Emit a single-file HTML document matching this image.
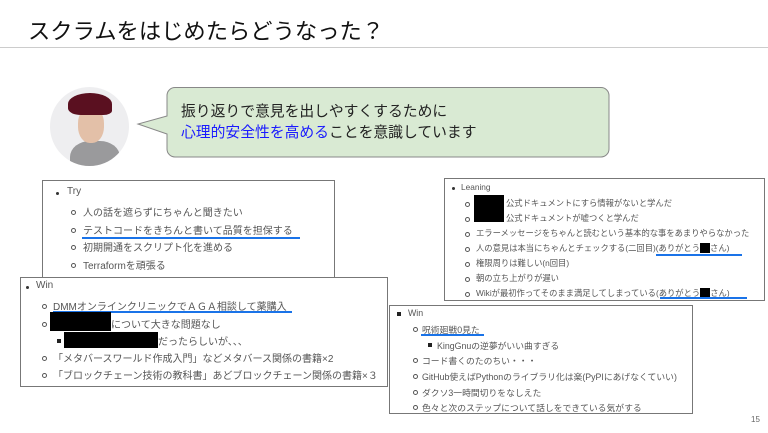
<!DOCTYPE html>
<html><head><meta charset="utf-8"><style>
body{margin:0;width:768px;height:433px;background:#fff;position:relative;overflow:hidden;font-family:"Liberation Sans","Noto Sans CJK JP",sans-serif;}
.a{position:absolute;white-space:nowrap;}
.box{position:absolute;border:1px solid #777;background:#fff;}
.t{position:absolute;white-space:nowrap;color:#555;}
.d{position:absolute;width:3px;height:3px;background:#333;border-radius:50%;}
.c{position:absolute;width:3px;height:3px;border:1px solid #555;border-radius:50%;}
.s{position:absolute;width:4px;height:4px;background:#222;}
.k{position:absolute;background:#000;}
.u{position:absolute;height:2px;background:#1a73e8;}
</style></head><body>
<div class="a" style="left:28px;top:14px;font-size:22.3px;color:#111;">スクラムをはじめたらどうなった？</div>
<div class="a" style="left:0;top:47px;width:768px;height:1px;background:#ccc;"></div>

<!-- avatar -->
<div class="a" style="left:50px;top:87px;width:79px;height:79px;border-radius:50%;background:#eeeef0;overflow:hidden;">
 <div class="a" style="left:20px;top:54px;width:50px;height:40px;background:#9a9a9c;border-radius:40% 40% 0 0;"></div>
 <div class="a" style="left:28px;top:20px;width:26px;height:36px;background:#e3c0a8;border-radius:45%;"></div>
 <div class="a" style="left:18px;top:6px;width:44px;height:22px;background:#5a1020;border-radius:50% 50% 20% 30%;"></div>
</div>

<!-- bubble -->
<svg class="a" style="left:130px;top:84px;" width="490" height="80">
<path d="M45 3.5 H471 a8 8 0 0 1 8 8 V65 a8 8 0 0 1 -8 8 H45 a8 8 0 0 1 -8 -8 V50 L8 40 L37 32 V11.5 a8 8 0 0 1 8 -8 Z" fill="#d9ead3" stroke="#888" stroke-width="1"/>
</svg>
<div class="a" style="left:181px;top:102px;font-size:14.8px;color:#222;line-height:21px;">振り返りで意見を出しやすくするために<br><span style="color:#1a1aff">心理的安全性を高める</span>ことを意識しています</div>

<!-- Try box -->
<div class="box" style="left:42px;top:180px;width:291px;height:110px;"></div>
<div class="d" style="left:56px;top:192px"></div><div class="t" style="left:67px;top:186px;font-size:10px;">Try</div>
<div class="c" style="left:71px;top:210px"></div><div class="t" style="left:83px;top:204px;font-size:10px;">人の話を遮らずにちゃんと聞きたい</div>
<div class="c" style="left:71px;top:228px"></div><div class="t" style="left:83px;top:222px;font-size:10px;">テストコードをきちんと書いて品質を担保する</div>
<div class="u" style="left:82px;top:237px;width:218px;"></div>
<div class="c" style="left:71px;top:245px"></div><div class="t" style="left:83px;top:239px;font-size:10px;">初期開通をスクリプト化を進める</div>
<div class="c" style="left:71px;top:263px"></div><div class="t" style="left:83px;top:257px;font-size:10px;">Terraformを頑張る</div>

<!-- Win box -->
<div class="box" style="left:20px;top:277px;width:366px;height:108px;"></div>
<div class="d" style="left:26px;top:286px"></div><div class="t" style="left:36px;top:280px;font-size:10px;">Win</div>
<div class="c" style="left:42px;top:304px"></div><div class="t" style="left:53px;top:298px;font-size:10px;">DMMオンラインクリニックでＡＧＡ相談して薬購入</div>
<div class="u" style="left:53px;top:311px;width:239px;"></div>
<div class="c" style="left:42px;top:322px"></div><div class="k" style="left:50px;top:312px;width:61px;height:19px;"></div><div class="t" style="left:111px;top:316px;font-size:10px;">について大きな問題なし</div>
<div class="s" style="left:57px;top:339px"></div><div class="k" style="left:64px;top:332px;width:94px;height:16px;"></div><div class="t" style="left:158px;top:333px;font-size:10px;">だったらしいが、、、</div>
<div class="c" style="left:42px;top:356px"></div><div class="t" style="left:53px;top:350px;font-size:10px;">「メタバースワールド作成入門」などメタバース関係の書籍×2</div>
<div class="c" style="left:42px;top:373px"></div><div class="t" style="left:53px;top:367px;font-size:10px;">「ブロックチェーン技術の教科書」あどブロックチェーン関係の書籍×３</div>

<!-- Leaning box -->
<div class="box" style="left:444px;top:178px;width:319px;height:121px;"></div>
<div class="d" style="left:452px;top:187px"></div><div class="t" style="left:461px;top:182px;font-size:8.3px;">Leaning</div>
<div class="c" style="left:465px;top:202px"></div><div class="k" style="left:474px;top:195px;width:30px;height:14px;"></div><div class="t" style="left:506px;top:197px;font-size:8.3px;">公式ドキュメントにすら情報がないと学んだ</div>
<div class="c" style="left:465px;top:217px"></div><div class="k" style="left:474px;top:208px;width:30px;height:14px;"></div><div class="t" style="left:506px;top:212px;font-size:8.3px;">公式ドキュメントが嘘つくと学んだ</div>
<div class="c" style="left:465px;top:232px"></div><div class="t" style="left:476px;top:227px;font-size:8.3px;">エラーメッセージをちゃんと読むという基本的な事をあまりやらなかった</div>
<div class="c" style="left:465px;top:247px"></div><div class="t" style="left:476px;top:242px;font-size:8.3px;">人の意見は本当にちゃんとチェックする(二回目)(ありがとう<span style="background:#000;color:#000">■■</span>さん)</div>
<div class="u" style="left:656px;top:254px;width:86px;"></div>
<div class="c" style="left:465px;top:262px"></div><div class="t" style="left:476px;top:257px;font-size:8.3px;">権限周りは難しい(n回目)</div>
<div class="c" style="left:465px;top:277px"></div><div class="t" style="left:476px;top:272px;font-size:8.3px;">朝の立ち上がりが遅い</div>
<div class="c" style="left:465px;top:292px"></div><div class="t" style="left:476px;top:287px;font-size:8.3px;">Wikiが最初作ってそのまま満足してしまっている(ありがとう<span style="background:#000;color:#000">■■</span>さん)</div>
<div class="u" style="left:660px;top:297px;width:87px;"></div>

<!-- Win2 box -->
<div class="box" style="left:389px;top:305px;width:302px;height:107px;"></div>
<div class="s" style="left:397px;top:312px"></div><div class="t" style="left:408px;top:308px;font-size:8.8px;">Win</div>
<div class="c" style="left:413px;top:327px"></div><div class="t" style="left:422px;top:323px;font-size:8.8px;">呪術廻戦0見た</div>
<div class="u" style="left:421px;top:334px;width:63px;"></div>
<div class="s" style="left:428px;top:343px"></div><div class="t" style="left:437px;top:339px;font-size:8.8px;">KingGnuの逆夢がいい曲すぎる</div>
<div class="c" style="left:413px;top:358px"></div><div class="t" style="left:422px;top:354px;font-size:8.8px;">コード書くのたのちい・・・</div>
<div class="c" style="left:413px;top:374px"></div><div class="t" style="left:422px;top:370px;font-size:8.8px;">GitHub使えばPythonのライブラリ化は楽(PyPIにあげなくていい)</div>
<div class="c" style="left:413px;top:390px"></div><div class="t" style="left:422px;top:386px;font-size:8.8px;">ダクソ3一時間切りをなしえた</div>
<div class="c" style="left:413px;top:405px"></div><div class="t" style="left:422px;top:401px;font-size:8.8px;">色々と次のステップについて話しをできている気がする</div>

<div class="a" style="left:751px;top:415px;font-size:8px;color:#666;">15</div>
</body></html>
